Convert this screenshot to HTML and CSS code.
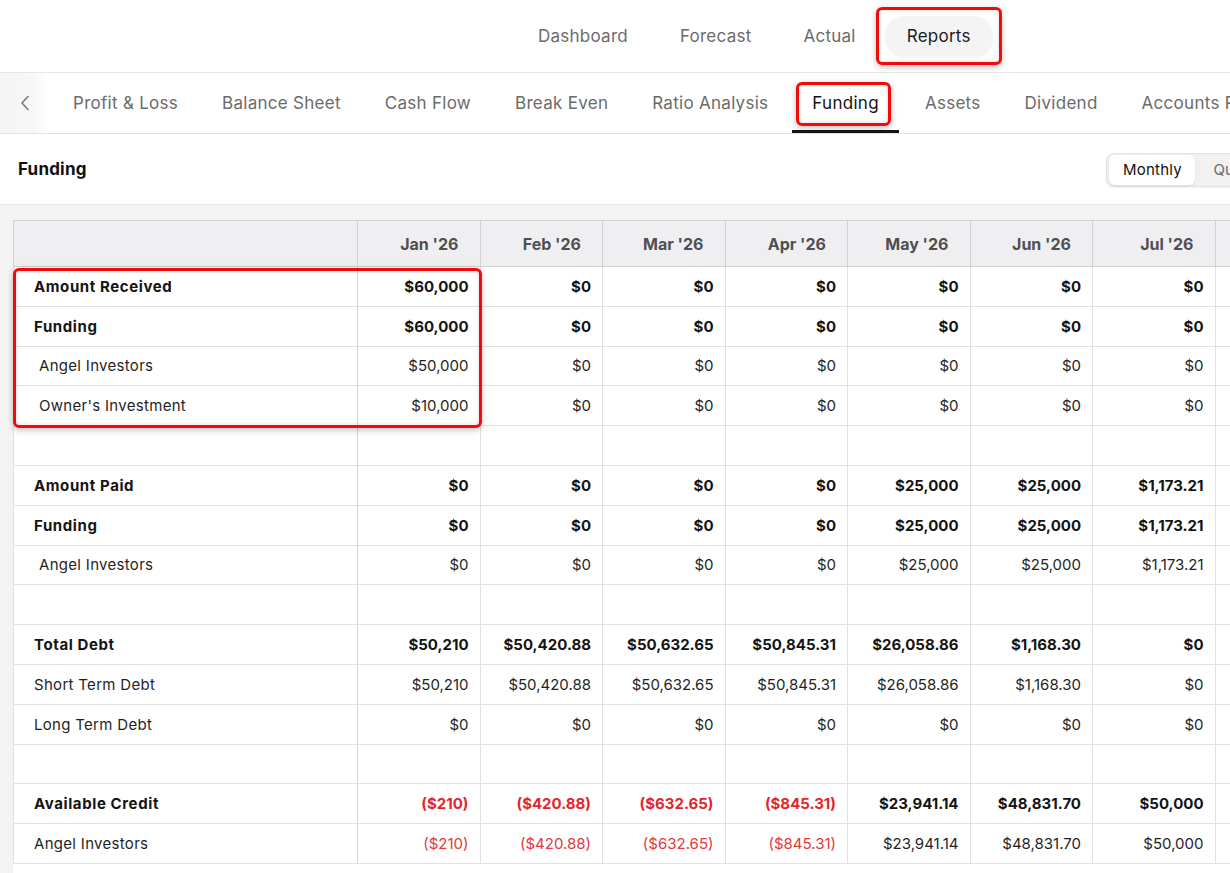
FILE: index.html
```html
<!DOCTYPE html>
<html lang="en">
<head>
<meta charset="utf-8">
<title>Funding Report</title>
<link rel="stylesheet" href="styles.css">
</head>
<body>
<header class="topnav">
  <nav class="topnav-items">
    <a class="topnav-item">Dashboard</a>
    <a class="topnav-item">Forecast</a>
    <a class="topnav-item">Actual</a>
    <a class="topnav-item topnav-item--active"><span class="pill">Reports</span><span class="highlight highlight--reports"></span></a>
  </nav>
</header>

<div class="tabs">
  <div class="tabs-scroll">
    <svg width="10" height="16" viewBox="0 0 10 16"><path d="M8 1.5 L2 8 L8 14.5" fill="none" stroke="#7a7a7a" stroke-width="1.6" stroke-linecap="round" stroke-linejoin="round"/></svg>
  </div>
  <div class="tab">Profit &amp; Loss</div>
  <div class="tab">Balance Sheet</div>
  <div class="tab">Cash Flow</div>
  <div class="tab">Break Even</div>
  <div class="tab">Ratio Analysis</div>
  <div class="tab tab--active">Funding<span class="highlight highlight--tab"></span></div>
  <div class="tab tab--after">Assets</div>
  <div class="tab">Dividend</div>
  <div class="tab">Accounts Receivable</div>
  <div class="tab">Accounts Payable</div>
</div>

<div class="section-head">
  <h1 class="section-title">Funding</h1>
  <div class="segmented">
    <span class="seg seg--active">Monthly</span>
    <span class="seg">Quarterly</span>
    <span class="seg">Yearly</span>
  </div>
</div>

<main class="content">
  <div class="table-wrap">
    <span class="highlight highlight--rows"></span>
    <table class="report">
      <colgroup>
        <col class="col-label">
        <col class="col-num"><col class="col-num"><col class="col-num"><col class="col-num">
        <col class="col-num"><col class="col-num"><col class="col-num"><col class="col-num">
      </colgroup>
      <thead>
        <tr>
          <th></th>
          <th>Jan '26</th><th>Feb '26</th><th>Mar '26</th><th>Apr '26</th>
          <th>May '26</th><th>Jun '26</th><th>Jul '26</th><th>Aug '26</th>
        </tr>
      </thead>
      <tbody>
        <tr class="bold"><td>Amount Received</td><td>$60,000</td><td>$0</td><td>$0</td><td>$0</td><td>$0</td><td>$0</td><td>$0</td><td>$0</td></tr>
        <tr class="bold"><td>Funding</td><td>$60,000</td><td>$0</td><td>$0</td><td>$0</td><td>$0</td><td>$0</td><td>$0</td><td>$0</td></tr>
        <tr><td class="indent">Angel Investors</td><td>$50,000</td><td>$0</td><td>$0</td><td>$0</td><td>$0</td><td>$0</td><td>$0</td><td>$0</td></tr>
        <tr><td class="indent">Owner's Investment</td><td>$10,000</td><td>$0</td><td>$0</td><td>$0</td><td>$0</td><td>$0</td><td>$0</td><td>$0</td></tr>
        <tr class="empty"><td></td><td></td><td></td><td></td><td></td><td></td><td></td><td></td><td></td></tr>
        <tr class="bold"><td>Amount Paid</td><td>$0</td><td>$0</td><td>$0</td><td>$0</td><td>$25,000</td><td>$25,000</td><td>$1,173.21</td><td>$0</td></tr>
        <tr class="bold"><td>Funding</td><td>$0</td><td>$0</td><td>$0</td><td>$0</td><td>$25,000</td><td>$25,000</td><td>$1,173.21</td><td>$0</td></tr>
        <tr><td class="indent">Angel Investors</td><td>$0</td><td>$0</td><td>$0</td><td>$0</td><td>$25,000</td><td>$25,000</td><td>$1,173.21</td><td>$0</td></tr>
        <tr class="empty"><td></td><td></td><td></td><td></td><td></td><td></td><td></td><td></td><td></td></tr>
        <tr class="bold"><td>Total Debt</td><td>$50,210</td><td>$50,420.88</td><td>$50,632.65</td><td>$50,845.31</td><td>$26,058.86</td><td>$1,168.30</td><td>$0</td><td>$0</td></tr>
        <tr><td>Short Term Debt</td><td>$50,210</td><td>$50,420.88</td><td>$50,632.65</td><td>$50,845.31</td><td>$26,058.86</td><td>$1,168.30</td><td>$0</td><td>$0</td></tr>
        <tr><td>Long Term Debt</td><td>$0</td><td>$0</td><td>$0</td><td>$0</td><td>$0</td><td>$0</td><td>$0</td><td>$0</td></tr>
        <tr class="empty"><td></td><td></td><td></td><td></td><td></td><td></td><td></td><td></td><td></td></tr>
        <tr class="bold"><td>Available Credit</td><td class="neg">($210)</td><td class="neg">($420.88)</td><td class="neg">($632.65)</td><td class="neg">($845.31)</td><td>$23,941.14</td><td>$48,831.70</td><td>$50,000</td><td>$50,000</td></tr>
        <tr><td>Angel Investors</td><td class="neg">($210)</td><td class="neg">($420.88)</td><td class="neg">($632.65)</td><td class="neg">($845.31)</td><td>$23,941.14</td><td>$48,831.70</td><td>$50,000</td><td>$50,000</td></tr>
      </tbody>
    </table>
  </div>
</main>
</body>
</html>
```

FILE: styles.css
```css
* { box-sizing: border-box; }

html, body {
  margin: 0;
  padding: 0;
  background: #ffffff;
  font-family: Inter, "Noto Sans", "Liberation Sans", sans-serif;
  color: #1b1b1b;
  overflow: hidden;
  width: 1230px;
  height: 873px;
}

/* ---------- top navigation ---------- */
.topnav {
  height: 73px;
  border-bottom: 1px solid #e6e6e6;
  display: flex;
  align-items: center;
}

.topnav-items {
  display: flex;
  align-items: center;
  padding-left: 512px;
}

.topnav-item {
  position: relative;
  font-size: 17px;
  color: #6b6b6b;
  padding: 0 26px;
  line-height: 40px;
  letter-spacing: 0.25px;
}

.topnav-item--active {
  padding: 0;
  margin-left: 3px;
}

.pill {
  display: block;
  width: 108px;
  height: 40px;
  border-radius: 20px;
  background: #f4f4f4;
  box-shadow: 0 1px 3px rgba(0, 0, 0, 0.08);
  color: #1b1b1b;
  text-align: center;
  line-height: 40px;
}

/* ---------- red annotation boxes ---------- */
.highlight {
  position: absolute;
  border: 3px solid #f00a0a;
  border-radius: 6px;
  box-shadow: 0 2px 6px rgba(0, 0, 0, 0.25), inset 0 0 4px rgba(0, 0, 0, 0.15);
  pointer-events: none;
  z-index: 5;
}

.highlight--reports {
  left: -9px;
  top: -9px;
  width: 126px;
  height: 58px;
}

.highlight--tab {
  left: 4px;
  right: 8px;
  top: 9px;
  bottom: 7px;
}

.highlight--rows {
  left: 0;
  top: 48px;
  width: 469px;
  height: 160px;
}

/* ---------- report tabs ---------- */
.tabs {
  height: 61px;
  border-bottom: 1px solid #e3e3e3;
  display: flex;
  align-items: stretch;
  white-space: nowrap;
}

.tabs-scroll {
  flex: 0 0 48px;
  display: flex;
  align-items: center;
  padding-left: 20px;
  background: linear-gradient(90deg, #f5f5f5 0%, #f7f7f7 70%, #ffffff 100%);
  margin-right: 5px;
}

.tab {
  position: relative;
  flex: 0 0 auto;
  display: flex;
  align-items: center;
  padding: 0 20px;
  margin-right: 4px;
  font-size: 17px;
  color: #6b6b6b;
  letter-spacing: 0.28px;
}

.tab--after {
  margin-left: 2px;
}

.tab--active {
  color: #141414;
  box-shadow: inset 0 -3px 0 #141414;
}

/* ---------- section header ---------- */
.section-head {
  height: 71px;
  border-bottom: 1px solid #e6e6e6;
  display: flex;
  align-items: center;
  justify-content: space-between;
  padding-left: 18px;
}

.section-title {
  margin: 0;
  font-size: 17px;
  font-weight: 700;
  color: #111;
  letter-spacing: 0.2px;
}

.segmented {
  flex: 0 0 auto;
  display: flex;
  align-items: center;
  gap: 2px;
  height: 34px;
  padding: 2px;
  margin-right: -150px;
  margin-top: 2px;
  background: #f1f1f1;
  border: 1px solid #e2e2e2;
  border-radius: 8px;
  box-shadow: 0 1px 2px rgba(0, 0, 0, 0.06);
}

.seg {
  font-size: 15px;
  color: #6b6b6b;
  padding: 0 16px;
  line-height: 30px;
  border-radius: 6px;
  letter-spacing: 0.2px;
}

.seg--active {
  background: #ffffff;
  color: #111;
  box-shadow: 0 1px 2px rgba(0, 0, 0, 0.1);
  width: 86px;
  text-align: center;
  padding: 0;
}

/* ---------- table area ---------- */
.content {
  background: #f3f3f3;
  padding: 15px 0 0 13px;
  height: 668px;
}

.table-wrap {
  position: relative;
  background: #ffffff;
  height: 100%;
}

.report {
  border-collapse: collapse;
  table-layout: fixed;
  width: 1324px;
  font-size: 15px;
}

.col-label { width: 344px; }
.col-num { width: 122.5px; }

.report thead th {
  height: 46px;
  background: #efeff1;
  border: 1px solid #d2d2d4;
  text-align: right;
  padding: 0 21px 0 0;
  font-size: 16px;
  font-weight: 700;
  color: #4f4f52;
}

.report td {
  height: 39.8px;
  border: 1px solid #e1e1e1;
  text-align: right;
  padding: 0 11px 0 0;
  color: #1f1f1f;
  white-space: nowrap;
}

.report td:first-child {
  text-align: left;
  padding: 0 0 0 20px;
  border-right-color: #d3d3d3;
  letter-spacing: 0.3px;
}

.report td.indent {
  padding-left: 25px;
}

.report tr.bold td {
  font-weight: 700;
  color: #141414;
}

.report tr.bold td:first-child {
  letter-spacing: 0.6px;
}

.report td.neg {
  color: #e5383b;
}

.report tr.bold td.neg {
  color: #e3262b;
}
```
